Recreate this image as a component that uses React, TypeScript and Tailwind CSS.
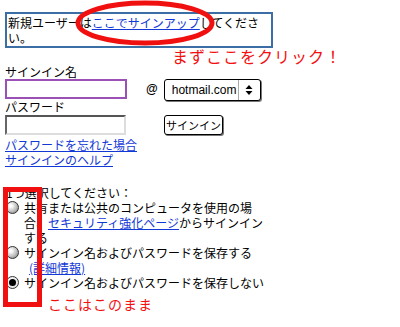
import React from "react";

const jp = { fontFamily: '"Noto Sans CJK JP", "Noto Sans", sans-serif' };

function Radio({ checked }: { checked?: boolean }) {
  return (
    <div
      className={
        "mt-[1px] h-[13px] w-[13px] shrink-0 rounded-full border border-[#333] flex items-center justify-center " +
        (checked
          ? "bg-[radial-gradient(circle_at_35%_35%,#ffffff,#d8d8d8)]"
          : "bg-[radial-gradient(circle_at_35%_35%,#ffffff_10%,#b8b8b8_60%,#6e6e6e)]")
      }
    >
      {checked && <div className="h-[7px] w-[7px] rounded-full bg-black" />}
    </div>
  );
}

export default function App() {
  return (
    <div
      className="relative w-[400px] h-[327px] overflow-hidden bg-white text-black text-[12px] leading-[15px]"
      style={jp}
    >
      {/* top notice box */}
      <div className="pt-[12px] pl-[5px]">
        <div className="w-[268px] border-2 border-[#3c6ea6] py-[1px] pl-[1px] pr-[5px]">
          新規ユーザーは
          <span className="text-[#1238d6] underline">ここでサインアップ</span>
          してくださ
          <br />
          い。
        </div>
      </div>

      <div className="pl-[172px] h-[16px] text-[16px] leading-[16px] tracking-[1px] text-[#f21010]">
        まずここをクリック！
      </div>

      {/* form */}
      <div className="pl-[5px]">
        <div className="h-[15px]">サインイン名</div>
        <div className="flex items-start h-[20px]">
          <div className="w-[122px] h-[20px] border-2 border-[#9a50b4] bg-white" />
          <div
            className="ml-[19px] mt-[3px] text-[12px] leading-[14px] font-bold"
            style={{ fontFamily: '"Liberation Sans", Arial, sans-serif' }}
          >
            @
          </div>
          <div className="ml-[6px] flex h-[22px] w-[97px] items-center rounded-[3px] border border-black bg-white shadow-[1px_1px_0_#777]">
            <div
              className="flex-1 pl-[7px] text-[12px] leading-[20px] whitespace-nowrap"
              style={{ fontFamily: '"Liberation Sans", Arial, sans-serif' }}
            >
              hotmail.com
            </div>
            <div className="flex h-full w-[22px] items-center justify-center border-l border-[#aaa]">
              <svg width="8" height="12" viewBox="0 0 8 12">
                <polygon points="4,1 7.5,5 0.5,5" fill="#000" />
                <polygon points="0.5,7 7.5,7 4,11" fill="#000" />
              </svg>
            </div>
          </div>
        </div>
        <div className="h-[16px] leading-[16px]">パスワード</div>
        <div className="flex items-start h-[20px]">
          <div className="w-[121px] h-[20px] border-2 border-t-[#555] border-l-[#666] border-r-[#ddd] border-b-[#ddd] bg-white" />
          <div className="ml-[38px] flex h-[20px] w-[59px] items-center justify-center whitespace-nowrap rounded-[3px] border border-black bg-white shadow-[1px_1px_0_#777] text-[11px] leading-[14px]">
            サインイン
          </div>
        </div>
        <div className="mt-[2px] text-[#1238d6]">
          <div className="underline">パスワードを忘れた場合</div>
          <div className="underline">サインインのヘルプ</div>
        </div>
      </div>

      {/* options */}
      <div className="mt-[18px] pl-[6px]">
        <div>1つ選択してください：</div>
        <div className="flex items-start">
          <Radio />
          <div className="ml-[5px]">
            共有または公共のコンピュータを使用の場
            <br />
            合、<span className="text-[#1238d6] underline">セキュリティ強化ページ</span>からサインイン
            <br />
            する
          </div>
        </div>
        <div className="flex items-start">
          <Radio />
          <div className="ml-[5px]">
            サインイン名およびパスワードを保存する
            <br />
            <span className="ml-[5px] text-[#1238d6] underline">(詳細情報)</span>
          </div>
        </div>
        <div className="flex items-start">
          <Radio checked />
          <div className="ml-[5px]">サインイン名およびパスワードを保存しない</div>
        </div>
      </div>

      <div className="mt-[6px] pl-[48px] h-[16px] text-[14px] leading-[16px] tracking-[1px] text-[#f21010]">
        ここはこのまま
      </div>

      {/* red annotations */}
      <svg
        className="absolute left-0 top-0 pointer-events-none"
        width="400"
        height="327"
        viewBox="0 0 400 327"
      >
        <ellipse cx="145" cy="23" rx="67" ry="20" fill="none" stroke="#f01010" strokeWidth="5" />
        <rect x="5.5" y="189.5" width="34" height="115" fill="none" stroke="#f01010" strokeWidth="5" />
      </svg>
    </div>
  );
}
